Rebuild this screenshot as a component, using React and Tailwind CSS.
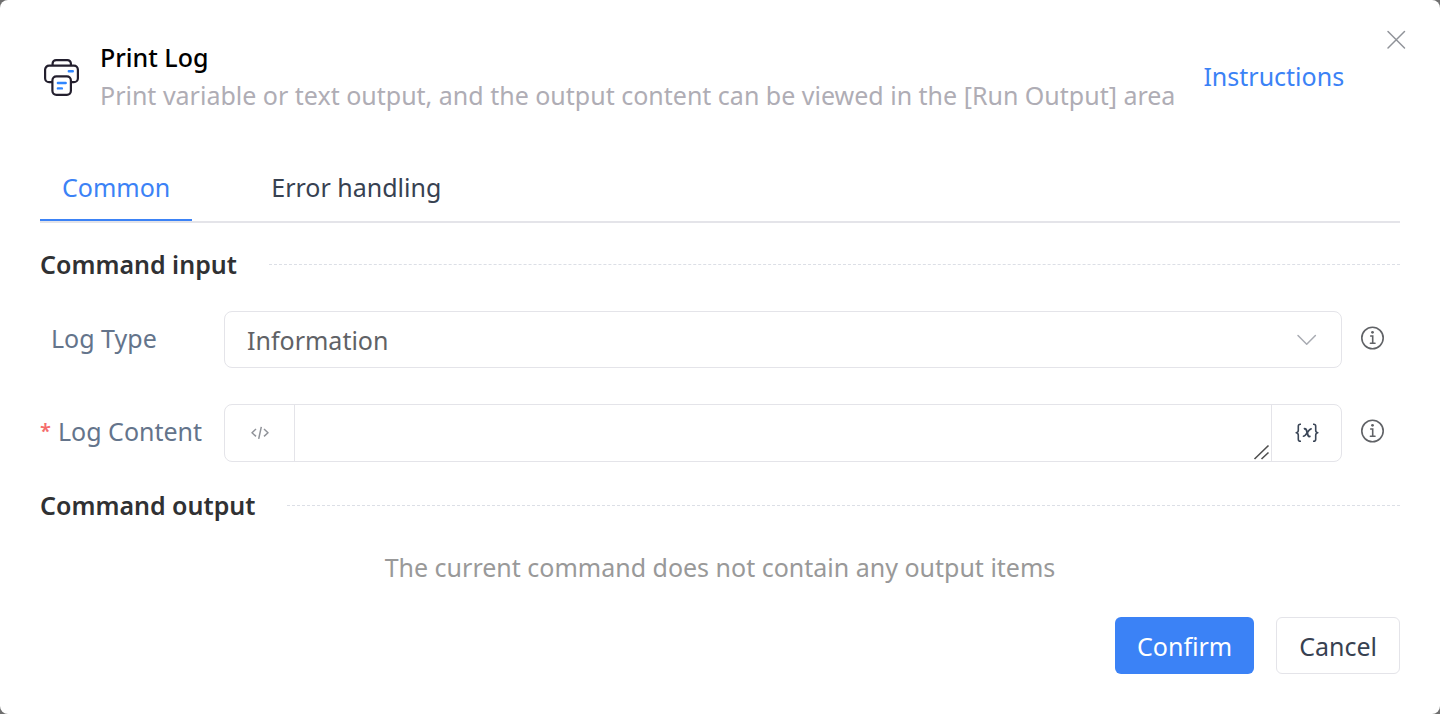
import React from "react";

function PrinterIcon() {
  return (
    <svg className="size-10 shrink-0 overflow-visible" viewBox="0 0 40 40" fill="none" strokeLinecap="round" strokeLinejoin="round" aria-hidden="true">
      <path d="M12.600 9V7.600a3.500 3.500 0 0 1 3.500-3.500h11.300a3.500 3.500 0 0 1 3.500 3.500V9" stroke="#231f2e" strokeWidth="2.200" />
      <path d="M12 26.200H9.100a4 4 0 0 1-4-4v-8.500a4 4 0 0 1 4-4h24.800a4 4 0 0 1 4 4v8.500a4 4 0 0 1-4 4H31.500" stroke="#231f2e" strokeWidth="2.200" />
      <rect x="12.400" y="20.400" width="18.500" height="18.400" rx="4" stroke="#231f2e" strokeWidth="2.200" />
      <path d="M28.800 15.300h4M17.900 27h7.800M17.900 32.400h4" stroke="#2f86ff" strokeWidth="2.400" />
    </svg>
  );
}

function CloseIcon() {
  return (
    <svg className="size-5" viewBox="0 0 20 20" fill="none" stroke="#909399" strokeWidth="1.5" strokeLinecap="round" aria-hidden="true">
      <path d="M2 1.500l16.500 16.500M18.500 1.500L2 18" />
    </svg>
  );
}

function InfoIcon() {
  return (
    <svg className="size-6" viewBox="0 0 24 24" fill="none" stroke="#606266" strokeWidth="1.6" strokeLinecap="round" aria-hidden="true">
      <circle cx="12.5" cy="12" r="10.7" />
      <path d="M10.700 10h2v7.200M10.400 17.200h4.600" />
      <circle cx="12.500" cy="6.300" r="1.400" fill="#606266" stroke="none" />
    </svg>
  );
}

function CodeIcon() {
  return (
    <svg className="size-5" viewBox="0 0 20 20" fill="none" stroke="#909399" strokeWidth="1.5" strokeLinejoin="round" aria-hidden="true">
      <path d="M6 6L2 9.700l4 3.700M14 6l4 3.700-4 3.700M11.300 3.800L8.700 15.800" />
    </svg>
  );
}

function VariableIcon() {
  return (
    <svg className="size-6" viewBox="0 0 24 24" fill="none" stroke="#3b4657" strokeWidth="1.6" strokeLinejoin="round" aria-hidden="true">
      <path d="M6 3.200H5.300c-1.500 0-2 .7-2 2v4c0 1.400-.6 2.200-2.100 2.500 1.500.3 2.100 1.100 2.100 2.500v4c0 1.300.5 2 2 2H6" />
      <path d="M18 3.200h.7c1.500 0 2 .7 2 2v4c0 1.400.6 2.200 2.100 2.500-1.500.3-2.100 1.100-2.100 2.500v4c0 1.300-.5 2-2 2H18" />
      <path strokeWidth="1.900" d="M8.800 7.900c1.500-.5 2.200-.1 2.700 1.300l1.400 4.800c.4 1.400 1.100 1.800 2.600 1.200" />
      <path d="M16.700 7.900c-1.400-.2-2.400.6-4.300 3.600-1.800 2.900-2.800 4-4.600 3.700" />
    </svg>
  );
}

function SectionTitle({ children, id }) {
  return (
    <div className="flex items-center gap-8">
      <h2 id={id} className="font-semibold text-[#303133]">{children}</h2>
      <div className="flex-1 border-t border-dashed border-[#dcdfe6]" />
    </div>
  );
}

function InfoButton({ label }) {
  return (
    <button type="button" aria-label={label} className="ml-[18px] mr-4 flex h-[54px] shrink-0 items-center">
      <InfoIcon />
    </button>
  );
}

export default function App() {
  return (
    <div className="min-h-screen bg-[#6f6f6f] font-['Noto_Sans','Liberation_Sans',sans-serif] text-[25px] leading-[38px]">
      <div role="dialog" aria-labelledby="dialog-title" className="relative min-h-screen rounded-lg bg-white px-10 pt-[38px] pb-10">
        <button type="button" aria-label="Close" className="absolute top-[30px] right-[34px]">
          <CloseIcon />
        </button>

        <header className="flex items-center">
          <PrinterIcon />
          <div className="ml-5">
            <h1 id="dialog-title" className="font-medium text-black">Print Log</h1>
            <p className="whitespace-nowrap text-[#afadb5]">
              Print variable or text output, and the output content can be viewed in the [Run Output] area
            </p>
          </div>
          <a href="#instructions" className="ml-7 text-[#3b82f6]">Instructions</a>
        </header>

        <div role="tablist" className="mt-10 flex h-[69px] gap-[57px] border-b-2 border-[#e4e4e9]">
          <button type="button" role="tab" aria-selected="true" className="border-b-2 border-[#3b82f6] px-[22px] text-[#3b82f6]">
            Common
          </button>
          <button type="button" role="tab" aria-selected="false" className="border-b-2 border-transparent px-[22px] text-[#374151]">
            Error handling
          </button>
        </div>

        <section aria-labelledby="input-title" className="mt-[22px]">
          <SectionTitle id="input-title">Command input</SectionTitle>

          <div className="mt-7 flex items-start">
            <label htmlFor="log-type" className="w-[184px] shrink-0 pl-[11px] leading-[54px] text-[#64748b]">Log Type</label>
            <div className="relative flex-1">
              <select id="log-type" className="block h-[57px] w-full appearance-none rounded-lg border border-[#e4e4e9] bg-white px-[22px] text-[#606266]">
                <option>Information</option>
                <option>Warning</option>
                <option>Error</option>
              </select>
              <svg className="pointer-events-none absolute top-[18px] right-6 size-[22px]" viewBox="0 0 22 22" fill="none" stroke="#a8abb2" strokeWidth="1.5" strokeLinecap="round" strokeLinejoin="round" aria-hidden="true">
                <path d="M2 6.500l8.700 8.700 8.700-8.700" />
              </svg>
            </div>
            <InfoButton label="About log type" />
          </div>

          <div className="mt-9 flex items-start">
            <label htmlFor="log-content" className="flex w-[184px] shrink-0 gap-2 leading-[54px] text-[#64748b]">
              <span className="w-[10px] text-xl font-semibold leading-[54px] text-[#f56c6c]">*</span>
              Log Content
            </label>
            <div className="flex h-[58px] min-w-0 flex-1 rounded-lg border border-[#e4e4e9]">
              <button type="button" aria-label="Toggle expression" className="flex w-[70px] items-center justify-center border-r border-[#e4e4e9]">
                <CodeIcon />
              </button>
              <div className="relative min-w-0 flex-1">
                <textarea id="log-content" className="block h-14 min-h-14 w-full resize-y px-[22px] py-2 outline-none [&::-webkit-resizer]:hidden" />
                <svg className="pointer-events-none absolute right-0 bottom-0 size-[18px]" viewBox="0 0 18 18" stroke="#505050" strokeWidth="1.600" aria-hidden="true">
                  <path d="M1.500 16L15.500 2.500M8.500 16L15.500 9.500" />
                </svg>
              </div>
              <button type="button" aria-label="Insert variable" className="flex w-[70px] items-center justify-center border-l border-[#e4e4e9]">
                <VariableIcon />
              </button>
            </div>
            <InfoButton label="About log content" />
          </div>
        </section>

        <section aria-labelledby="output-title" className="mt-6">
          <SectionTitle id="output-title">Command output</SectionTitle>
          <p className="mt-6 text-center text-[#999999]">The current command does not contain any output items</p>
        </section>

        <footer className="mt-[31px] flex justify-end gap-[22px]">
          <button type="button" className="h-[57px] rounded-md bg-[#3b82f6] px-[22px] text-white">Confirm</button>
          <button type="button" className="h-[57px] rounded-md border border-[#e4e4e9] px-[22px] text-[#374151]">Cancel</button>
        </footer>
      </div>
    </div>
  );
}
